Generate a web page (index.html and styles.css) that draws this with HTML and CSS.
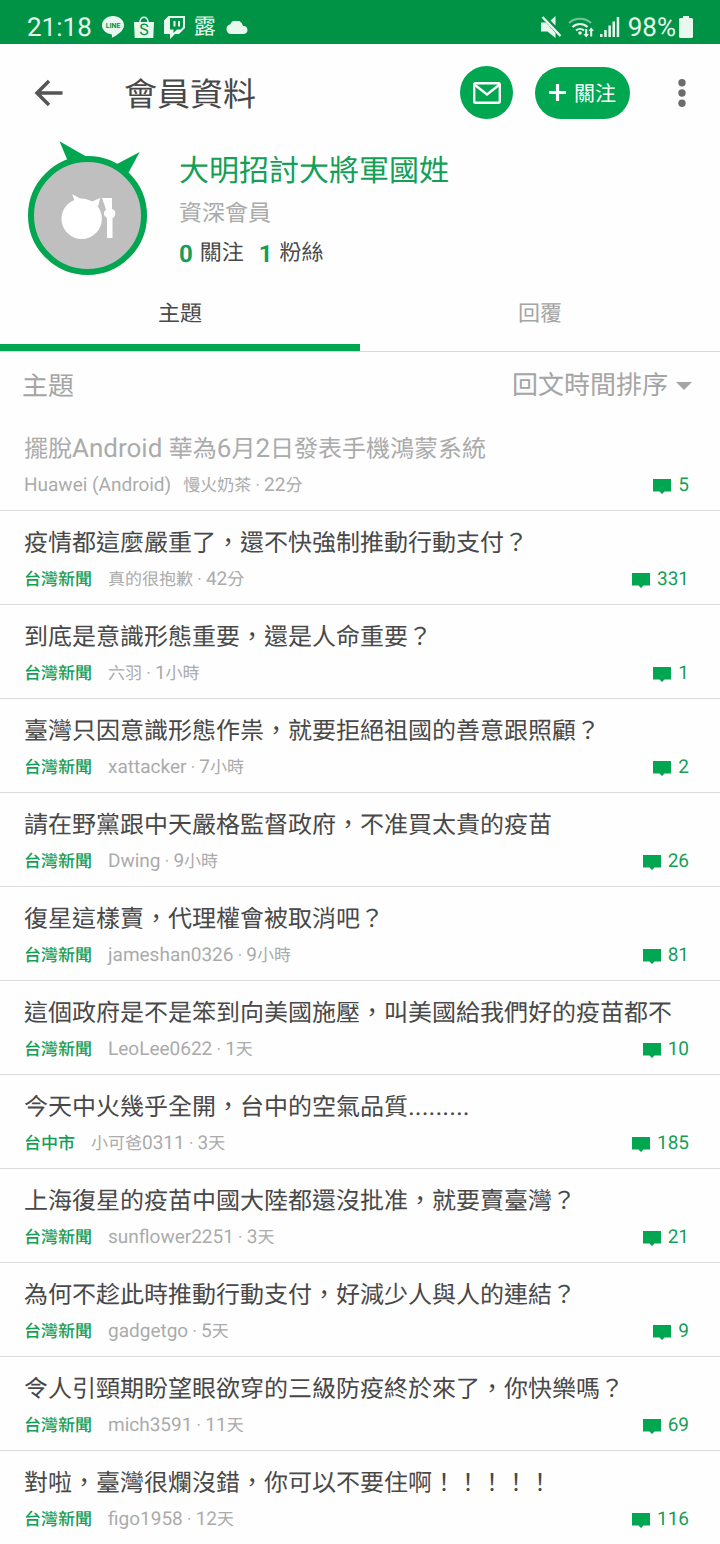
FILE: index.html
```
<!DOCTYPE html>
<html lang="zh-Hant">
<head>
<meta charset="utf-8">
<meta name="viewport" content="width=device-width, initial-scale=1">
<title>會員資料</title>
<link rel="stylesheet" href="styles.css">
</head>
<body>
<div class="statusbar">
  <span class="clock">21:18</span>
  <svg class="notice" width="22" height="22" viewBox="0 0 22 22"><path d="M11 0C5 0 0 4 0 9.200c0 4.500 4 8.200 9 9 1.200.3 1.200 1 .8 3.600 4-2 12.200-6.400 12.200-12.600C22 4 17 0 11 0z"/><text class="line-text" x="11" y="12" text-anchor="middle">LINE</text></svg>
  <svg class="notice" width="20" height="22" viewBox="0 0 20 22"><path d="M0 6h5.200C5.400 2.500 7.300.5 10 .5s4.600 2 4.800 5.500H20l-.7 16H.7zM6.700 6h6.600C13 3.400 11.900 2 10 2S7 3.400 6.700 6z" fill-rule="evenodd"/><text class="bag-text" x="10" y="19" text-anchor="middle">S</text></svg>
  <svg class="notice twitch" width="21" height="23" viewBox="0 0 21 23"><path fill-rule="evenodd" d="M4.500 0H21v12l-6 6h-4l-5 5v-5H0V4.500zM6 2v11.500h3.500V17l3.500-3.500h3.500L19 11V2zM9.500 5h2v5.500h-2zM14 5h2v5.500h-2z"/></svg>
  <span class="lu">露</span>
  <svg class="notice" width="22" height="13" viewBox="0 0 22 13"><path d="M5 13a5 5 0 0 1-.8-9.800A6.800 6.800 0 0 1 17 5a4 4 0 0 1 .8 8z"/></svg>
  <span class="spacer"></span>
  <svg width="21" height="22" viewBox="0 0 21 22"><path d="M0 6.500h5L14.500 17v5L6.500 15.500H0zM14.500 0v9.500L9.500 4.500z"/><path d="M1.500 1L19.500 20" stroke="#e9f8ee" stroke-width="2.400"/></svg>
  <svg class="wifi" width="28" height="22" viewBox="0 0 28 22"><g fill="none" stroke="#e9f8ee" stroke-width="2"><path d="M1 7a16.500 16.500 0 0 1 22 0" opacity=".5"/><path d="M4.500 11a11 11 0 0 1 15 0M8 14.500a6 6 0 0 1 8 0"/></g><circle cx="12" cy="17" r="1.800"/><path d="M17.200 13h2v5H21l-2.800 3.500L15.400 18h1.800zM24.200 20.500h-2V15h-1.800l2.800-3.500L26 15h-1.800z"/></svg>
  <svg class="signal" width="20" height="20" viewBox="0 0 20 20"><path d="M0 17h2.500v3H0zM4.200 13h2.500v7H4.200zM8.400 8.500h2.500V20H8.400zM12.500 4.500H15V20h-2.500zM16.700 0h2.500v20h-2.500z"/></svg>
  <span class="clock">98%</span>
  <svg class="battery" width="14" height="22" viewBox="0 0 14 22"><path d="M4 0h6v2h3l1 1v18l-1 1H1l-1-1V3l1-1h3z"/></svg>
</div>

<header class="appbar">
  <button class="icon-btn" type="button" aria-label="返回"><svg width="30" height="28" viewBox="0 0 30 28"><path d="M28.500 14H3M15 2L3 14l12 12" fill="none" stroke="#555" stroke-width="3.500"/></svg></button>
  <h1 class="page-title">會員資料</h1>
  <button class="mail-btn" type="button" aria-label="訊息"><svg width="28" height="22" viewBox="0 0 28 22"><rect x="1.200" y="1.200" width="25.600" height="19.600" rx="1.500" fill="none" stroke="#fff" stroke-width="2.400"/><path d="M2 3l12 9.500L26 3" fill="none" stroke="#fff" stroke-width="2.400"/></svg></button>
  <button class="follow-btn" type="button"><svg width="17" height="17" viewBox="0 0 17 17"><path d="M8.500 0v17M0 8.500h17" stroke="#fff" stroke-width="3.200"/></svg><span>關注</span></button>
  <button class="icon-btn" type="button" aria-label="更多"><svg width="8" height="28" viewBox="0 0 8 28"><g fill="#6c6c6c"><circle cx="4" cy="3.800" r="3.700"/><circle cx="4" cy="14" r="3.700"/><circle cx="4" cy="24.200" r="3.700"/></g></svg></button>
</header>

<section class="profile">
  <svg class="avatar" width="120" height="136" viewBox="28 141 120 136">
    <path fill="#00a650" d="M59.500 141.200L87 157l-18 7zM139.700 152L116 164.500l12 9z"/>
    <circle cx="87.500" cy="215.500" r="56.500" fill="#bfbfbf" stroke="#00a650" stroke-width="6"/>
    <g fill="#fff"><circle cx="81.700" cy="218.800" r="20.200"/><path d="M72.300 194.300L82 199.500l-7 3zM100.200 198l-8.200 3.500 6 5z"/><path d="M102 198h10v11a4.800 4.800 0 0 1 .5 9v20h-5.500v-20a4.800 4.800 0 0 1-1-8.500z"/></g>
  </svg>
  <div class="profile-info">
    <h2 class="name">大明招討大將軍國姓</h2>
    <p class="rank">資深會員</p>
    <p class="stats"><b>0</b><span>關注</span><b>1</b><span>粉絲</span></p>
  </div>
</section>

<nav class="tabs" role="tablist">
  <button class="tab active" type="button" role="tab" aria-selected="true">主題</button>
  <button class="tab" type="button" role="tab" aria-selected="false">回覆</button>
</nav>

<div class="sortbar">
  <label for="sort">主題</label>
  <span class="sort-wrap"><select id="sort"><option>回文時間排序</option></select><svg width="16" height="8" viewBox="0 0 16 8"><path d="M0 0h16L8 8z" fill="#a5a5a5"/></svg></span>
</div>

<main class="posts">
  <a class="post read" href="#"><span class="title">擺脫<i>Android </i>華為<i>6</i>月<i>2</i>日發表手機鴻蒙系統</span><span class="meta"><span class="board"><i>Huawei (Android)</i></span><span class="by">慢火奶茶 · <i>22</i>分</span><span class="count"><svg width="18" height="15" viewBox="0 0 18 15"><path d="M0 0h18v12.500h-6.500L9 15l-2.500-2.500H0z"/></svg>5</span></span></a>
  <a class="post" href="#"><span class="title">疫情都這麼嚴重了，還不快強制推動行動支付？</span><span class="meta"><span class="board">台灣新聞</span><span class="by">真的很抱歉 · <i>42</i>分</span><span class="count"><svg width="18" height="15" viewBox="0 0 18 15"><path d="M0 0h18v12.500h-6.500L9 15l-2.500-2.500H0z"/></svg>331</span></span></a>
  <a class="post" href="#"><span class="title">到底是意識形態重要，還是人命重要？</span><span class="meta"><span class="board">台灣新聞</span><span class="by">六羽 · <i>1</i>小時</span><span class="count"><svg width="18" height="15" viewBox="0 0 18 15"><path d="M0 0h18v12.500h-6.500L9 15l-2.500-2.500H0z"/></svg>1</span></span></a>
  <a class="post" href="#"><span class="title">臺灣只因意識形態作祟，就要拒絕祖國的善意跟照顧？</span><span class="meta"><span class="board">台灣新聞</span><span class="by"><i>xattacker</i> · <i>7</i>小時</span><span class="count"><svg width="18" height="15" viewBox="0 0 18 15"><path d="M0 0h18v12.500h-6.500L9 15l-2.500-2.500H0z"/></svg>2</span></span></a>
  <a class="post" href="#"><span class="title">請在野黨跟中天嚴格監督政府，不准買太貴的疫苗</span><span class="meta"><span class="board">台灣新聞</span><span class="by"><i>Dwing</i> · <i>9</i>小時</span><span class="count"><svg width="18" height="15" viewBox="0 0 18 15"><path d="M0 0h18v12.500h-6.500L9 15l-2.500-2.500H0z"/></svg>26</span></span></a>
  <a class="post" href="#"><span class="title">復星這樣賣，代理權會被取消吧？</span><span class="meta"><span class="board">台灣新聞</span><span class="by"><i>jameshan0326</i> · <i>9</i>小時</span><span class="count"><svg width="18" height="15" viewBox="0 0 18 15"><path d="M0 0h18v12.500h-6.500L9 15l-2.500-2.500H0z"/></svg>81</span></span></a>
  <a class="post" href="#"><span class="title">這個政府是不是笨到向美國施壓，叫美國給我們好的疫苗都不</span><span class="meta"><span class="board">台灣新聞</span><span class="by"><i>LeoLee0622</i> · <i>1</i>天</span><span class="count"><svg width="18" height="15" viewBox="0 0 18 15"><path d="M0 0h18v12.500h-6.500L9 15l-2.500-2.500H0z"/></svg>10</span></span></a>
  <a class="post" href="#"><span class="title">今天中火幾乎全開，台中的空氣品質<i>.........</i></span><span class="meta"><span class="board">台中市</span><span class="by">小可爸<i>0311</i> · <i>3</i>天</span><span class="count"><svg width="18" height="15" viewBox="0 0 18 15"><path d="M0 0h18v12.500h-6.500L9 15l-2.500-2.500H0z"/></svg>185</span></span></a>
  <a class="post" href="#"><span class="title">上海復星的疫苗中國大陸都還沒批准，就要賣臺灣？</span><span class="meta"><span class="board">台灣新聞</span><span class="by"><i>sunflower2251</i> · <i>3</i>天</span><span class="count"><svg width="18" height="15" viewBox="0 0 18 15"><path d="M0 0h18v12.500h-6.500L9 15l-2.500-2.500H0z"/></svg>21</span></span></a>
  <a class="post" href="#"><span class="title">為何不趁此時推動行動支付，好減少人與人的連結？</span><span class="meta"><span class="board">台灣新聞</span><span class="by"><i>gadgetgo</i> · <i>5</i>天</span><span class="count"><svg width="18" height="15" viewBox="0 0 18 15"><path d="M0 0h18v12.500h-6.500L9 15l-2.500-2.500H0z"/></svg>9</span></span></a>
  <a class="post" href="#"><span class="title">令人引頸期盼望眼欲穿的三級防疫終於來了，你快樂嗎？</span><span class="meta"><span class="board">台灣新聞</span><span class="by"><i>mich3591</i> · <i>11</i>天</span><span class="count"><svg width="18" height="15" viewBox="0 0 18 15"><path d="M0 0h18v12.500h-6.500L9 15l-2.500-2.500H0z"/></svg>69</span></span></a>
  <a class="post" href="#"><span class="title">對啦，臺灣很爛沒錯，你可以不要住啊！！！！！</span><span class="meta"><span class="board">台灣新聞</span><span class="by"><i>figo1958</i> · <i>12</i>天</span><span class="count"><svg width="18" height="15" viewBox="0 0 18 15"><path d="M0 0h18v12.500h-6.500L9 15l-2.500-2.500H0z"/></svg>116</span></span></a>
</main>
</body>
</html>
```
FILE: styles.css
```
* { box-sizing: border-box; }
body {
  margin: 0;
  background: #fefefe;
  color: #484848;
  font-family: Roboto, "Noto Sans CJK TC", sans-serif;
  text-rendering: geometricPrecision;
}
h1, h2, p { margin: 0; font-weight: 400; }
button, select { font: inherit; border: 0; padding: 0; background: none; color: inherit; text-rendering: inherit; }
svg { display: block; flex: none; }
i { font-style: normal; line-height: 1; white-space: pre; }

.statusbar {
  display: flex;
  align-items: center;
  height: 44px;
  padding: 10px 27px 0;
  background: #009345;
  color: #e9f8ee;
  fill: #e9f8ee;
}
.clock { padding-top: 2px; font-size: 26px; line-height: 32px; }
.notice { margin-left: 10px; }
.line-text { font: 700 7px Roboto, sans-serif; fill: #009345; }
.bag-text { font: 400 16px Roboto, sans-serif; fill: #009345; }
.lu { margin-left: 9px; padding-top: 2px; font-size: 22px; line-height: 24px; }
.spacer { flex: 1; }
.wifi { margin-left: 6px; }
.signal { margin: 0 8px 0 4px; }
.battery { margin-left: 3px; }

.appbar {
  display: flex;
  align-items: center;
  height: 97px;
  padding: 0 34px;
}
.icon-btn { display: flex; }
.page-title { flex: 1; margin-left: 60px; padding-top: 6px; font-size: 33px; line-height: 44px; }
.mail-btn {
  display: grid;
  place-items: center;
  width: 53px;
  height: 53px;
  margin-right: 22px;
  border-radius: 50%;
  background: #00a650;
}
.follow-btn {
  display: flex;
  align-items: center;
  gap: 8px;
  height: 52px;
  margin-right: 48px;
  padding: 0 14px;
  border-radius: 26px;
  background: #00a650;
  color: #fff;
  font-size: 21px;
}
.follow-btn span { padding-top: 4px; line-height: 28px; }

.profile { display: flex; gap: 31px; padding: 0 28px; }
.profile-info { padding-top: 9px; }
.name { font-size: 30px; line-height: 44px; color: #159f56; }
.rank { font-size: 23px; line-height: 40px; color: #ababab; }
.stats { display: flex; font-size: 22px; line-height: 40px; }
.stats b { margin-right: 7px; font-size: 24px; color: #159f56; }
.stats span { margin-right: 15px; }

.tabs { display: flex; border-bottom: 1px solid #d8d8d8; }
.tab {
  flex: 1;
  height: 74px;
  padding-top: 2px;
  border-bottom: 7px solid transparent;
  font-size: 22px;
  color: #a5a5a5;
}
.tab.active { border-color: #00a650; color: #484848; }

.sortbar {
  display: flex;
  align-items: center;
  justify-content: space-between;
  height: 65px;
  padding: 3px 28px 0 22px;
  font-size: 26px;
  color: #a5a5a5;
}
.sortbar label { padding-top: 2px; line-height: 28px; }
.sort-wrap { display: flex; align-items: center; gap: 7px; }
.sort-wrap select { appearance: none; }

.post {
  display: block;
  padding: 13px 31px 8px 24px;
  border-bottom: 1px solid #dcdcdc;
  color: inherit;
  text-decoration: none;
}
.post:last-child { border-bottom: 0; }
.title {
  display: block;
  height: 38px;
  overflow: hidden;
  white-space: nowrap;
  font-size: 24px;
  line-height: 38px;
}
.title i { font-size: 26px; }
.meta {
  display: flex;
  align-items: center;
  gap: 16px;
  height: 34px;
  font-size: 17px;
  line-height: 34px;
  color: #ababab;
}
.meta i { font-size: 19px; }
.board, .by { padding-top: 2px; }
.board { color: #159f56; font-weight: 500; }
.read .title, .read .board { color: #ababab; font-weight: 400; }
.read .meta { gap: 12px; }
.count {
  display: flex;
  align-items: center;
  gap: 7px;
  margin-left: auto;
  font-size: 19px;
  color: #159f56;
  fill: #00a650;
}
.count svg { margin-top: 3px; }
```
